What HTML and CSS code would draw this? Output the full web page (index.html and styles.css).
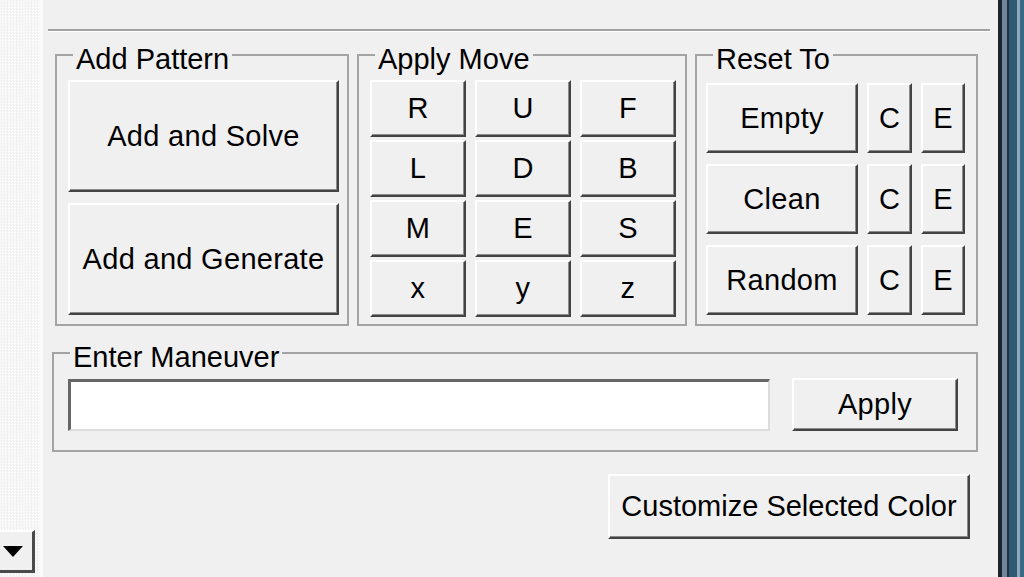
FILE: index.html
```html
<!DOCTYPE html>
<html>
<head>
<meta charset="utf-8">
<title>Cube Controls</title>
<link rel="stylesheet" href="styles.css">
</head>
<body>
<div class="window">
  <div class="scrollstrip">
    <div class="scroll-btn">
      <svg width="20" height="11" viewBox="0 0 20 11"><polygon points="0,0 20,0 10,11" fill="#000"/></svg>
    </div>
  </div>
  <div class="main">
    <div class="topline"></div>
    <div class="group-row">
      <fieldset class="group g-pattern">
        <legend>Add Pattern</legend>
        <div class="pattern-body">
          <button class="btn">Add and Solve</button>
          <button class="btn">Add and Generate</button>
        </div>
      </fieldset>
      <fieldset class="group g-move">
        <legend>Apply Move</legend>
        <div class="move-grid">
          <button class="btn">R</button>
          <button class="btn">U</button>
          <button class="btn">F</button>
          <button class="btn">L</button>
          <button class="btn">D</button>
          <button class="btn">B</button>
          <button class="btn">M</button>
          <button class="btn">E</button>
          <button class="btn">S</button>
          <button class="btn">x</button>
          <button class="btn">y</button>
          <button class="btn">z</button>
        </div>
      </fieldset>
      <fieldset class="group g-reset">
        <legend>Reset To</legend>
        <div class="reset-grid">
          <button class="btn">Empty</button>
          <button class="btn">C</button>
          <button class="btn">E</button>
          <button class="btn">Clean</button>
          <button class="btn">C</button>
          <button class="btn">E</button>
          <button class="btn">Random</button>
          <button class="btn">C</button>
          <button class="btn">E</button>
        </div>
      </fieldset>
    </div>
    <fieldset class="group g-maneuver">
      <legend>Enter Maneuver</legend>
      <div class="maneuver-body">
        <input class="field" type="text" value="">
        <button class="btn btn-apply">Apply</button>
      </div>
    </fieldset>
    <div class="bottom-row">
      <button class="btn btn-custom">Customize Selected Color</button>
    </div>
  </div>
  <div class="rightbar"></div>
</div>
</body>
</html>
```
FILE: styles.css
```css
html, body {
  margin: 0;
  padding: 0;
}
body {
  width: 1024px;
  height: 577px;
  overflow: hidden;
  background: #f0f0f0;
  font-family: "Liberation Sans", Arial, sans-serif;
  font-size: 29px;
  color: #000;
}
.window {
  display: flex;
  height: 577px;
}
.scrollstrip {
  width: 40px;
  flex: none;
  box-sizing: border-box;
  display: flex;
  flex-direction: column;
  justify-content: flex-end;
  padding-bottom: 4px;
  background-color: #f8f8f8;
  background-image: repeating-conic-gradient(#f1f1f1 0 25%, #fcfcfc 0 50%);
  background-size: 3px 3px;
}
.scroll-btn {
  width: 35px;
  height: 43px;
  box-sizing: border-box;
  background: #f0f0f0;
  border-top: 2px solid #fff;
  border-right: 3px solid #4a4a4a;
  border-bottom: 3px solid #4a4a4a;
  display: flex;
  align-items: center;
  padding-left: 3px;
}
.scroll-btn svg {
  display: block;
}
.main {
  flex: 1;
  min-width: 0;
  border-left: 3px solid #fbfbfb;
  padding: 29px 0 0 5px;
  display: flex;
  flex-direction: column;
}
.topline {
  height: 0;
  border-top: 2px solid #a2a2a2;
  border-bottom: 1px solid #fff;
  margin-right: 5px;
}
.group-row {
  display: flex;
  gap: 8px;
  margin-top: 4px;
  padding-left: 7px;
}
.group {
  margin: 0;
  padding: 0;
  min-width: 0;
  box-sizing: border-box;
  border: 2px solid #a4a4a4;
}
.group legend {
  padding: 8px 3px 0;
  margin-left: 16px;
  line-height: 30px;
  font-size: 29px;
}
.g-pattern { width: 294px; }
.g-move { width: 330px; }
.g-reset { width: 283px; }
.btn {
  font: inherit;
  color: #000;
  background: #f0f0f0;
  margin: 0;
  padding: 0;
  box-sizing: border-box;
  border-top: 2px solid #fff;
  border-left: 2px solid #fff;
  border-right: 2px solid #434343;
  border-bottom: 2px solid #434343;
  box-shadow: inset -1px -1px 0 #8c8c8c;
  text-align: center;
  white-space: nowrap;
  letter-spacing: 0.3px;
}
.pattern-body {
  display: flex;
  flex-direction: column;
  gap: 11px;
  padding: 6px 8px 9px 11px;
}
.pattern-body .btn {
  height: 112px;
}
.move-grid {
  display: grid;
  grid-template-columns: repeat(3, 96px);
  grid-auto-rows: 57px;
  column-gap: 9px;
  row-gap: 3px;
  padding: 6px 0 7px 11px;
}
.reset-grid {
  display: grid;
  grid-template-columns: 152px 45px 44px;
  grid-auto-rows: 70px;
  column-gap: 9px;
  row-gap: 11px;
  padding: 9px 0 0 9px;
}
.g-maneuver {
  margin: 8px 17px 0 4px;
}
.maneuver-body {
  display: flex;
  align-items: flex-start;
  gap: 22px;
  padding: 6px 18px 19px 14px;
}
.field {
  flex: 1;
  min-width: 0;
  height: 52px;
  margin: 1px 0 0;
  padding: 0;
  box-sizing: border-box;
  background: #fff;
  border-top: 3px solid #666;
  border-left: 3px solid #666;
  border-right: 2px solid #dcdcdc;
  border-bottom: 2px solid #dcdcdc;
  font: inherit;
}
.btn-apply {
  width: 166px;
  height: 53px;
  flex: none;
}
.bottom-row {
  display: flex;
  justify-content: flex-end;
  margin-top: 22px;
  padding-right: 25px;
}
.btn-custom {
  width: 362px;
  height: 65px;
  letter-spacing: 0;
}
.rightbar {
  width: 29px;
  flex: none;
  background: linear-gradient(to right,
    #f5eeee 0 3px,
    #1a2430 3px 7px,
    #71869a 7px 12px,
    #1f3142 12px 14px,
    #2e5a74 14px 22px,
    #90a8b8 22px 25px,
    #3a6a86 25px 29px);
}
```
